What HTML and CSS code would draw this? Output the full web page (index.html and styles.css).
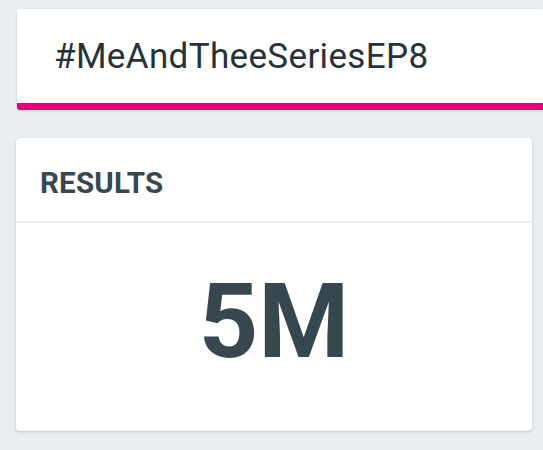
FILE: index.html
```html
<!DOCTYPE html>
<html>
<head>
<meta charset="utf-8">
<link rel="stylesheet" href="styles.css">
</head>
<body>
<div class="page">
  <div class="search-card">
    <div class="search-text">#MeAndTheeSeriesEP8</div>
  </div>
  <div class="results-card">
    <div class="results-header">RESULTS</div>
    <div class="results-body">5M</div>
  </div>
</div>
</body>
</html>
```
FILE: styles.css
```css
html, body {
  margin: 0;
  padding: 0;
  overflow: hidden;
  background: #e9edf0;
  font-family: Roboto, "Liberation Sans", sans-serif;
}
.page {
  width: 543px;
  height: 450px;
  padding: 9px 0 0 16px;
  box-sizing: border-box;
  display: flex;
  flex-direction: column;
  align-items: flex-start;
}
.search-card {
  align-self: stretch;
  margin-left: 1px;
  height: 101px;
  box-sizing: border-box;
  background: #fff;
  border-bottom: 7px solid #e2007b;
  border-radius: 3px 0 0 3px;
  box-shadow: 0 1px 3px rgba(0,0,0,0.15);
  padding: 0 0 0 37px;
  display: flex;
  align-items: center;
}
.search-text {
  font-size: 35px;
  letter-spacing: 0.35px;
  color: #263238;
  margin-top: 1px;
  white-space: nowrap;
}
.results-card {
  margin-top: 28px;
  width: 516px;
  height: 293px;
  background: #fff;
  border-radius: 4px;
  box-shadow: 0 1px 3px rgba(0,0,0,0.18);
  display: flex;
  flex-direction: column;
}
.results-header {
  height: 85px;
  box-sizing: border-box;
  border-bottom: 2px solid #eceef0;
  padding: 6px 0 0 24px;
  display: flex;
  align-items: center;
  font-size: 29.5px;
  letter-spacing: 0.2px;
  font-weight: 700;
  color: #37474f;
}
.results-body {
  flex: 1;
  display: flex;
  justify-content: center;
  align-items: center;
  padding-bottom: 12px;
  font-size: 104px;
  font-weight: 700;
  color: #37474f;
}
```
